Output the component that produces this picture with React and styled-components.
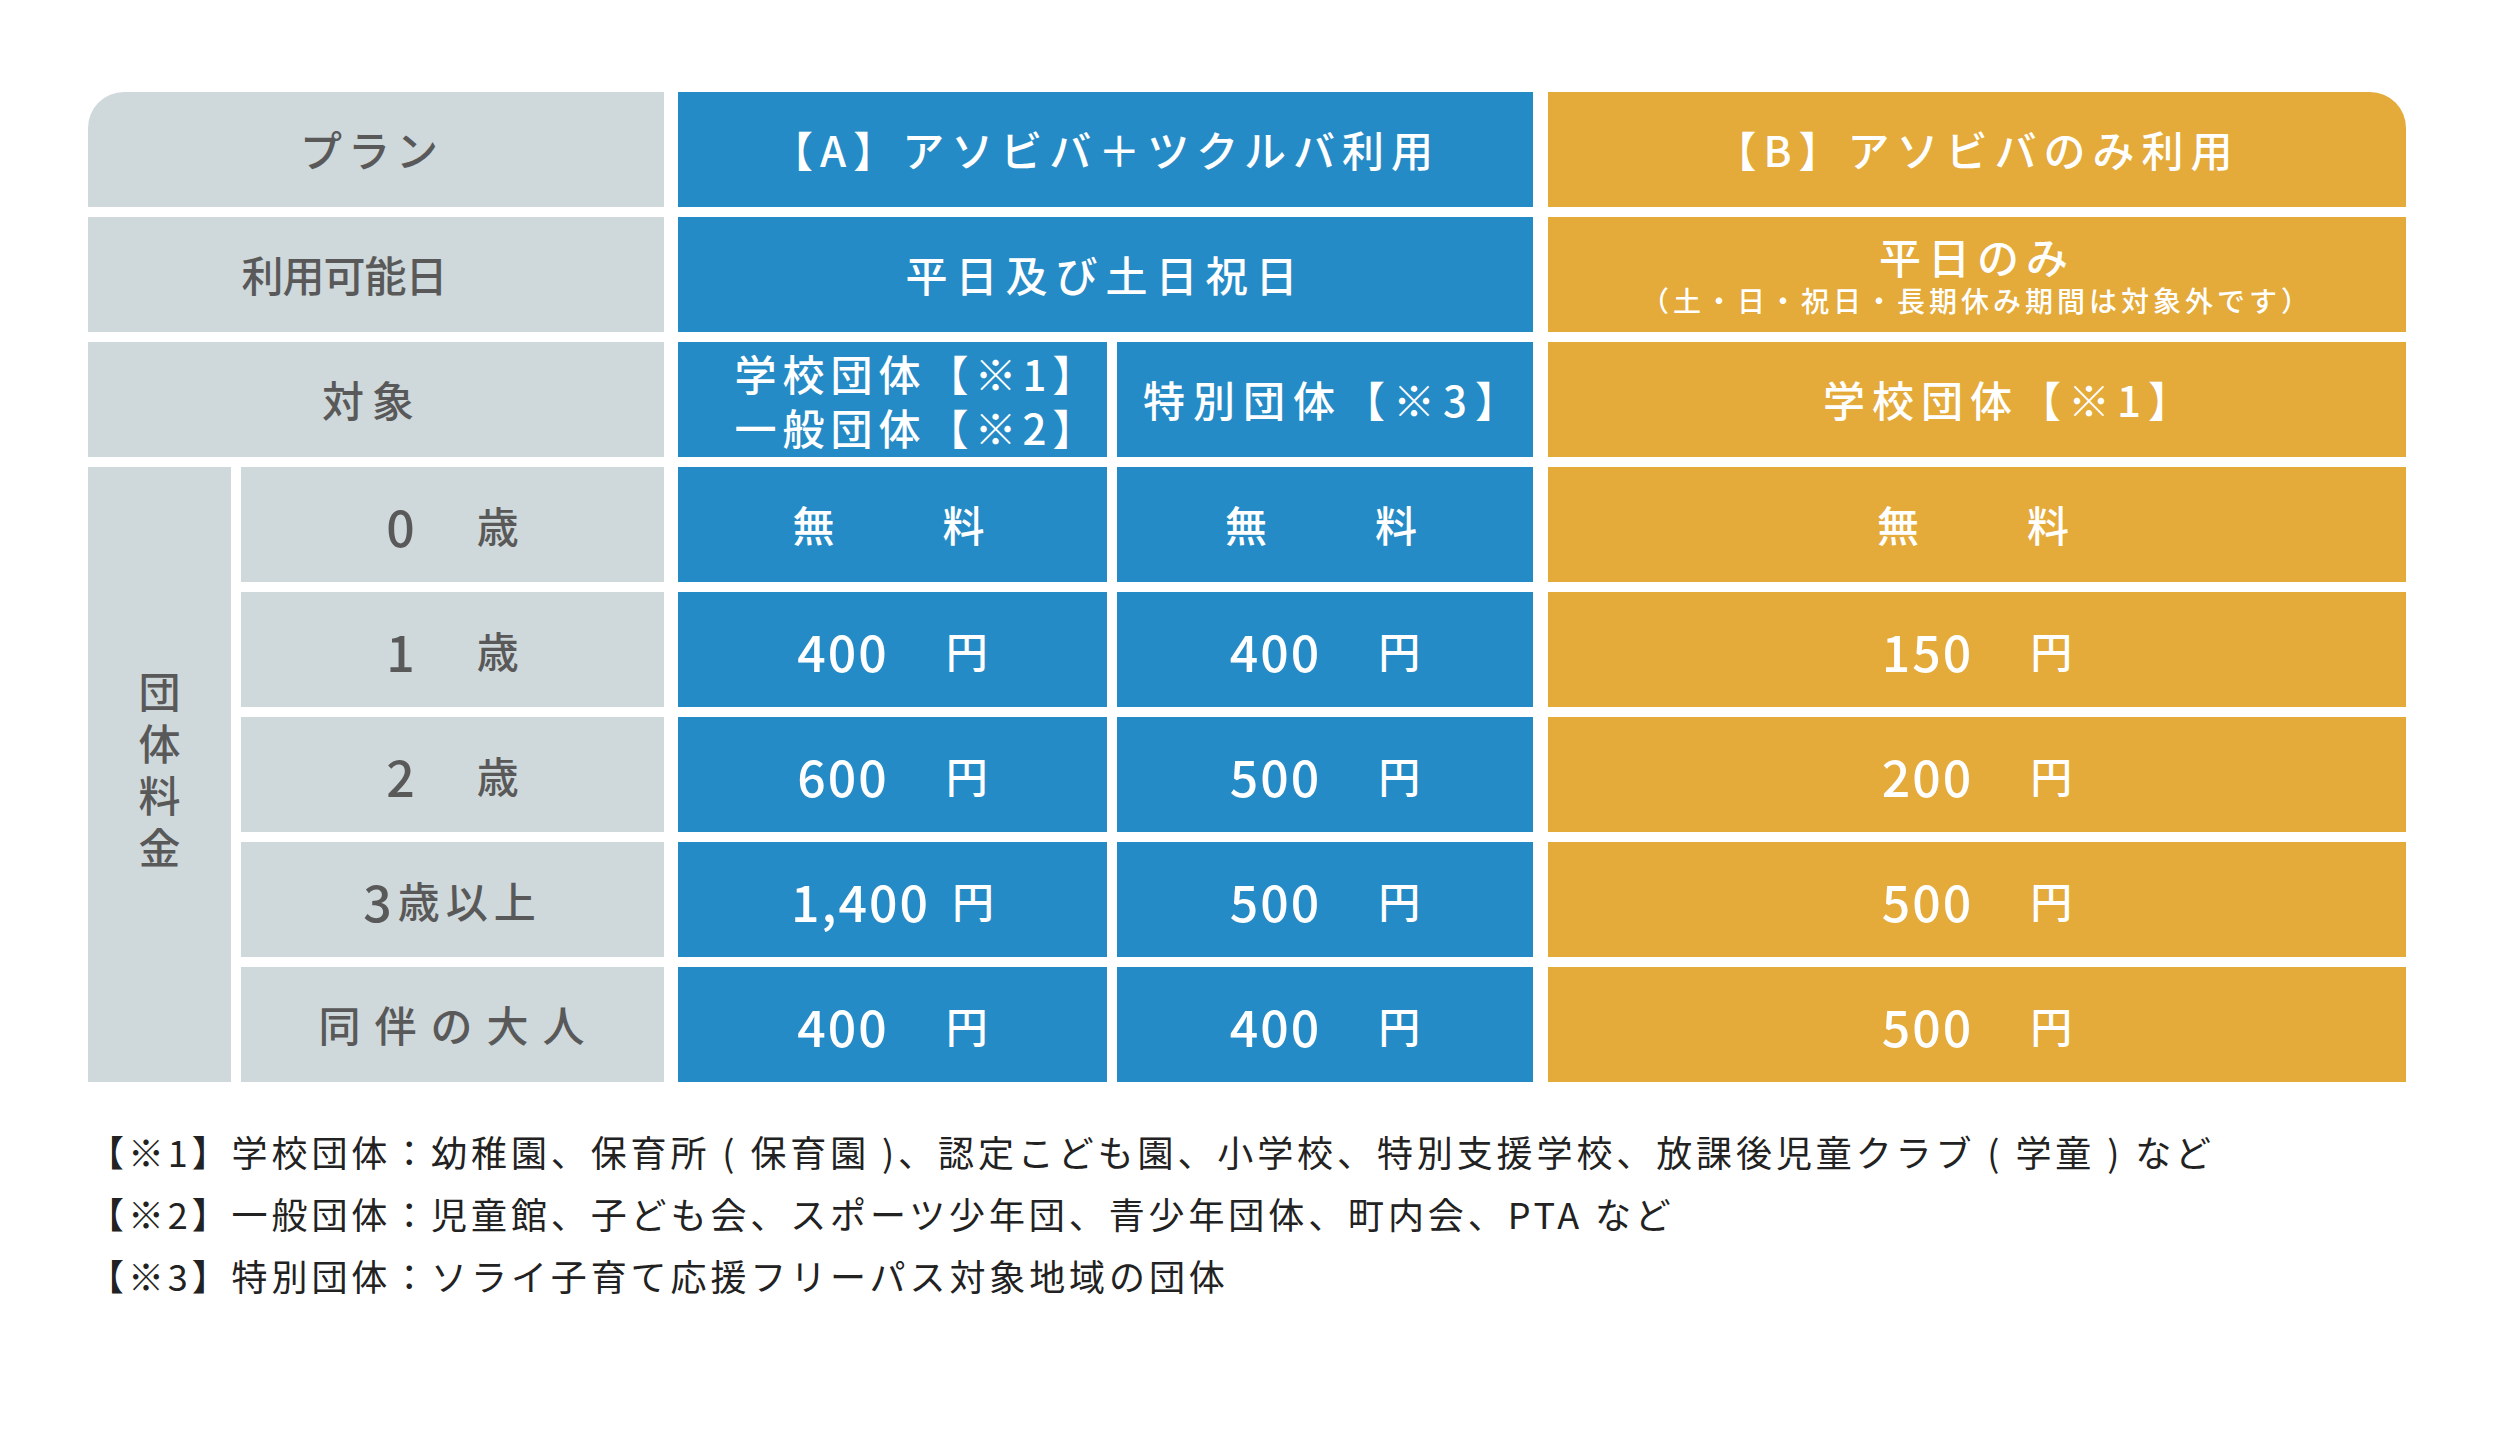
import React from 'react'
import styled, { createGlobalStyle } from 'styled-components'

const GlobalStyle = createGlobalStyle`
    html, body {
        margin: 0;
        padding: 0;
        background: #ffffff;
    }
    body {
        font-family: "Noto Sans CJK JP", "Noto Sans", sans-serif;
    }
`;

const GRAY = '#cfd8db';
const BLUE = '#258bc6';
const ORANGE = '#e4aa3a';

const FREE = { text: '無　　料', ls: 8 };
const yen = (num, gap = 57) => ({ num, unit: '円', gap });

const ageRows = [
    { key: '0', label: { num: '0', unit: '歳', gap: 60 }, a1: FREE, a2: FREE, b: FREE },
    { key: '1', label: { num: '1', unit: '歳', gap: 60 }, a1: yen('400'), a2: yen('400'), b: yen('150') },
    { key: '2', label: { num: '2', unit: '歳', gap: 60 }, a1: yen('600'), a2: yen('500'), b: yen('200') },
    { key: '3', label: { num: '3', unit: '歳以上', gap: 4, ls: 6 }, a1: yen('1,400', 22), a2: yen('500'), b: yen('500') },
    { key: 'adult', label: { text: '同伴の大人', ls: 14 }, a1: yen('400'), a2: yen('400'), b: yen('500') },
];

const notes = [
    '【※1】学校団体：幼稚園、保育所 ( 保育園 )、認定こども園、小学校、特別支援学校、放課後児童クラブ ( 学童 ) など',
    '【※2】一般団体：児童館、子ども会、スポーツ少年団、青少年団体、町内会、PTA など',
    '【※3】特別団体：ソライ子育て応援フリーパス対象地域の団体',
];

// number + unit, or a plain text value
function Amount({ v }) {
    if (v.text) return <Line $ls={v.ls ?? 10}>{v.text}</Line>
    return (
        <>
            <Num>{v.num}</Num>
            <Unit $gap={v.gap} $ls={v.ls}>{v.unit}</Unit>
        </>
    )
}

export default function App() {
    return (
        <>
            <GlobalStyle />
            <Page>
                <PriceTable>
                    {/* row 1 : plan */}
                    <Cell $tone="gray" $col="1 / 3" $corner="left" $ls={6} $shift={8}>プラン</Cell>
                    <Cell $tone="blue" $col="3 / 5" $lead={4} $ls={7}>【A】アソビバ＋ツクルバ利用</Cell>
                    <Cell $tone="orange" $col="5 / 6" $lead={5} $corner="right" $ls={7}>【B】アソビバのみ利用</Cell>

                    {/* row 2 : days */}
                    <Cell $tone="gray" $col="1 / 3" $ls={-1} $shift={64}>利用可能日</Cell>
                    <Cell $tone="blue" $col="3 / 5" $lead={4} $ls={8}>平日及び土日祝日</Cell>
                    <Cell $tone="orange" $col="5 / 6" $lead={5}>
                        <Stack>
                            <Line $ls={7} $lh={50}>平日のみ</Line>
                            <Note>（土・日・祝日・長期休み期間は対象外です）</Note>
                        </Stack>
                    </Cell>

                    {/* row 3 : target */}
                    <Cell $tone="gray" $col="1 / 3" $ls={8} $shift={8}>対象</Cell>
                    <Cell $tone="blue" $col="3 / 4" $lead={4} $shift={-50}>
                        <Stack>
                            <Line $ls={6} $lh={54}>学校団体【※1】</Line>
                            <Line $ls={6} $lh={54}>一般団体【※2】</Line>
                        </Stack>
                    </Cell>
                    <Cell $tone="blue" $col="4 / 5" $ls={8} $shift={-18}>特別団体【※3】</Cell>
                    <Cell $tone="orange" $col="5 / 6" $lead={5} $ls={7} $shift={-66}>学校団体【※1】</Cell>

                    <GroupCell>団体料金</GroupCell>

                    {ageRows.map((r) => (
                        <React.Fragment key={r.key}>
                            <Cell $tone="gray" $col="2 / 3" $shift={r.key === 'adult' ? -12 : 0}><Amount v={r.label} /></Cell>
                            <Cell $tone="blue" $col="3 / 4" $lead={4}><Amount v={r.a1} /></Cell>
                            <Cell $tone="blue" $col="4 / 5"><Amount v={r.a2} /></Cell>
                            <Cell $tone="orange" $col="5 / 6" $lead={5}><Amount v={r.b} /></Cell>
                        </React.Fragment>
                    ))}
                </PriceTable>

                <Notes>
                    {notes.map((n) => (
                        <li key={n}>{n}</li>
                    ))}
                </Notes>
            </Page>
        </>
    )
}

const Page = styled.div`
    width: 2500px;
    height: 1444px;
    box-sizing: border-box;
    padding: 92px 94px 0 88px;
`;

const PriceTable = styled.div`
    display: grid;
    grid-template-columns: 143px 423px 433px 416px 863px;
    grid-template-rows: repeat(8, 115px);
    column-gap: 10px;
    row-gap: 10px;
    width: 2318px;
`;

const tones = {
    gray: { bg: GRAY, fg: '#595959' },
    blue: { bg: BLUE, fg: '#ffffff' },
    orange: { bg: ORANGE, fg: '#ffffff' },
};

const Cell = styled.div`
    grid-column: ${(p) => p.$col};
    margin-left: ${(p) => p.$lead || 0}px;
    display: flex;
    align-items: center;
    justify-content: center;
    box-sizing: border-box;
    padding-right: ${(p) => Math.max(p.$shift || 0, 0)}px;
    padding-left: ${(p) => Math.max(-(p.$shift || 0), 0)}px;
    background: ${(p) => tones[p.$tone].bg};
    color: ${(p) => tones[p.$tone].fg};
    font-size: 42px;
    font-weight: 500;
    letter-spacing: ${(p) => p.$ls || 0}px;
    line-height: 1.2;
    white-space: pre;
    border-top-left-radius: ${(p) => (p.$corner === 'left' ? '36px' : '0')};
    border-top-right-radius: ${(p) => (p.$corner === 'right' ? '36px' : '0')};
`;

const GroupCell = styled.div`
    grid-column: 1 / 2;
    grid-row: 4 / 9;
    display: flex;
    align-items: center;
    justify-content: center;
    background: ${GRAY};
    color: #595959;
    font-size: 42px;
    font-weight: 500;
    writing-mode: vertical-rl;
    letter-spacing: 10px;
`;

const Stack = styled.div`
    display: flex;
    flex-direction: column;
    align-items: center;
`;

const Line = styled.span`
    display: block;
    letter-spacing: ${(p) => p.$ls || 0}px;
    line-height: ${(p) => (p.$lh ? `${p.$lh}px` : '1.2')};
`;

const Num = styled.span`
    font-size: 50px;
    letter-spacing: 2px;
    font-variant-numeric: tabular-nums;
    line-height: 1;
`;

const Unit = styled.span`
    margin-left: ${(p) => p.$gap || 0}px;
    letter-spacing: ${(p) => p.$ls || 0}px;
    line-height: 1;
`;

const Note = styled.span`
    display: block;
    font-size: 28px;
    letter-spacing: 4px;
    line-height: 38px;
`;

const Notes = styled.ul`
    list-style: none;
    margin: 38px 0 0;
    padding: 0;
    font-size: 36px;
    font-weight: 400;
    color: #222222;
    letter-spacing: 3.9px;
    line-height: 62px;
    li {
        white-space: pre;
    }
`;
